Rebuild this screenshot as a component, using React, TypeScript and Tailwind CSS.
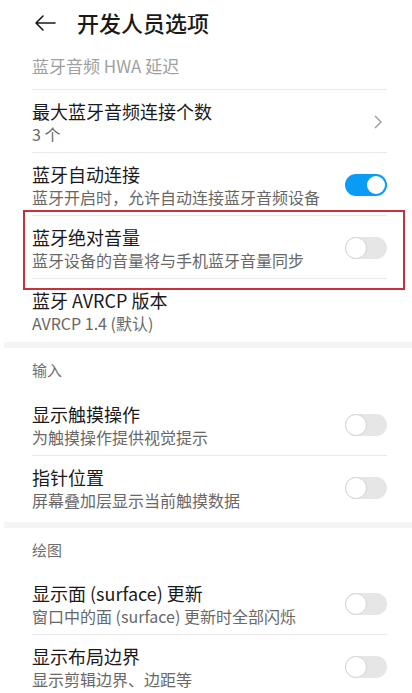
import React from 'react';

type Row = {
  title: string;
  sub: string;
  control?: 'on' | 'off' | 'chevron';
  last?: boolean;
};

const font = { fontFamily: '"Noto Sans CJK SC", "Noto Sans", sans-serif' };

const Toggle = ({ on }: { on: boolean }) =>
  on ? (
    <div className="w-[42px] h-[22px] rounded-full bg-[#0a9cf4] flex items-center justify-end pr-[2px]">
      <div className="w-[18px] h-[18px] rounded-full bg-white" />
    </div>
  ) : (
    <div className="w-[42px] h-[22px] rounded-full bg-[#e6e6e6] flex items-center">
      <div className="w-[22px] h-[22px] rounded-full bg-white border border-[#d4d4d4]" />
    </div>
  );

const Chevron = () => (
  <svg width="12" height="16" viewBox="0 0 12 16" className="mr-[3px]">
    <path d="M3 2 L9 8 L3 14" fill="none" stroke="#9a9a9a" strokeWidth="1.4" />
  </svg>
);

const SettingRow = ({ row }: { row: Row }) => (
  <div className="pl-8 pr-[25px]">
    <div
      className={`flex items-center justify-between pt-[9px] ${
        row.last ? 'pb-[8px]' : 'pb-[7px] border-b border-[#e9e9e9]'
      }`}
    >
      <div>
        <div className="text-[18px] leading-[24px] text-[#1a1a1a]">{row.title}</div>
        <div className="text-[16px] leading-[22px] text-[#686868]">{row.sub}</div>
      </div>
      {row.control === 'chevron' && <Chevron />}
      {row.control === 'on' && <Toggle on />}
      {row.control === 'off' && <Toggle on={false} />}
    </div>
  </div>
);

const SectionHeader = ({ label, h }: { label: string; h: string }) => (
  <div className={`pl-8 flex items-center ${h} text-[15px] text-[#707070]`}>{label}</div>
);

const Gap = () => <div className="ml-1 h-[6px] bg-[#f4f4f4]" />;

const App = () => {
  const bluetooth: Row[] = [
    { title: '最大蓝牙音频连接个数', sub: '3 个', control: 'chevron' },
    { title: '蓝牙自动连接', sub: '蓝牙开启时，允许自动连接蓝牙音频设备', control: 'on' },
    { title: '蓝牙绝对音量', sub: '蓝牙设备的音量将与手机蓝牙音量同步', control: 'off' },
    { title: '蓝牙 AVRCP 版本', sub: 'AVRCP 1.4 (默认)', last: true },
  ];
  const input: Row[] = [
    { title: '显示触摸操作', sub: '为触摸操作提供视觉提示', control: 'off' },
    { title: '指针位置', sub: '屏幕叠加层显示当前触摸数据', control: 'off', last: true },
  ];
  const drawing: Row[] = [
    { title: '显示面 (surface) 更新', sub: '窗口中的面 (surface) 更新时全部闪烁', control: 'off' },
    { title: '显示布局边界', sub: '显示剪辑边界、边距等', control: 'off' },
  ];

  return (
    <div className="relative w-[412px] h-[693px] overflow-hidden bg-white" style={font}>
      {/* header */}
      <div className="h-[45px] flex items-center pl-[33px]">
        <svg width="24" height="24" viewBox="0 0 24 24">
          <path
            d="M22 12 H3 M10 5 L3 12 L10 19"
            fill="none"
            stroke="#1a1a1a"
            strokeWidth="1.6"
            strokeLinecap="round"
            strokeLinejoin="round"
          />
        </svg>
        <div className="ml-[20px] text-[22px] font-medium text-[#1a1a1a]">开发人员选项</div>
      </div>

      <div className="pl-8 pr-[25px]">
        <div className="pt-[9px] pb-[11px] border-b border-[#e9e9e9] text-[17px] leading-[24px] text-[#a0a0a0]">
          蓝牙音频 HWA 延迟
        </div>
      </div>

      {bluetooth.map((r) => (
        <SettingRow key={r.title} row={r} />
      ))}
      <Gap />
      <SectionHeader label="输入" h="h-[45px]" />
      {input.map((r) => (
        <SettingRow key={r.title} row={r} />
      ))}
      <div className="h-[3px]" />
      <Gap />
      <SectionHeader label="绘图" h="h-[44px]" />
      {drawing.map((r) => (
        <SettingRow key={r.title} row={r} />
      ))}

      {/* highlight annotation */}
      <div className="absolute left-[23px] top-[210px] w-[382px] h-[80px] border-2 border-[#c8303a]" />
    </div>
  );
};

export default App;
